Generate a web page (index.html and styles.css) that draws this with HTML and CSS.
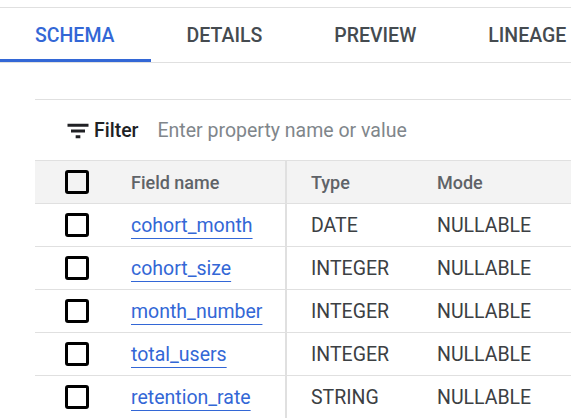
FILE: index.html
```html
<!DOCTYPE html>
<html>
<head>
<meta charset="utf-8">
<link rel="stylesheet" href="styles.css">
</head>
<body>
<div class="page">
  <nav class="tabs">
    <div class="tab active">SCHEMA</div>
    <div class="tab">DETAILS</div>
    <div class="tab">PREVIEW</div>
    <div class="tab">LINEAGE</div>
  </nav>
  <section class="schema">
    <div class="filter-bar">
      <svg class="filter-icon" viewBox="0 0 24 24" width="28" height="28"><path d="M10 18.2h4v-2.6h-4v2.6zM3 5.8v2.6h18V5.8H3zm3 7.5h12v-2.6H6v2.6z" fill="#202124"/></svg>
      <span class="filter-label">Filter</span>
      <span class="filter-placeholder">Enter property name or value</span>
    </div>
    <div class="fields">
      <div class="row head">
        <div class="cell sel"><span class="checkbox"></span></div>
        <div class="cell name">Field name</div>
        <div class="cell type">Type</div>
        <div class="cell mode">Mode</div>
      </div>
      <div class="row">
        <div class="cell sel"><span class="checkbox"></span></div>
        <div class="cell name"><a class="field-link">cohort_month</a></div>
        <div class="cell type">DATE</div>
        <div class="cell mode">NULLABLE</div>
      </div>
      <div class="row">
        <div class="cell sel"><span class="checkbox"></span></div>
        <div class="cell name"><a class="field-link">cohort_size</a></div>
        <div class="cell type">INTEGER</div>
        <div class="cell mode">NULLABLE</div>
      </div>
      <div class="row">
        <div class="cell sel"><span class="checkbox"></span></div>
        <div class="cell name"><a class="field-link">month_number</a></div>
        <div class="cell type">INTEGER</div>
        <div class="cell mode">NULLABLE</div>
      </div>
      <div class="row">
        <div class="cell sel"><span class="checkbox"></span></div>
        <div class="cell name"><a class="field-link">total_users</a></div>
        <div class="cell type">INTEGER</div>
        <div class="cell mode">NULLABLE</div>
      </div>
      <div class="row">
        <div class="cell sel"><span class="checkbox"></span></div>
        <div class="cell name"><a class="field-link">retention_rate</a></div>
        <div class="cell type">STRING</div>
        <div class="cell mode">NULLABLE</div>
      </div>
    </div>
  </section>
</div>
</body>
</html>
```
FILE: styles.css
```css
* { box-sizing: border-box; }
html, body { margin: 0; padding: 0; background: #fff; }
body {
  font-family: Roboto, "Liberation Sans", Arial, sans-serif;
  font-size: 19.5px;
  color: #3c4043;
  overflow: hidden;
}
.page {
  padding-top: 7px;
}
.tabs {
  display: flex;
  border-top: 1px solid #e0e0e0;
  border-bottom: 1px solid #e0e0e0;
  height: 56px;
  overflow: hidden;
}
.tab {
  flex: none;
  padding: 0 36px 0 35px;
  height: 54px;
  display: flex;
  align-items: center;
  font-weight: 500;
  color: #454b50;
  border-bottom: 3px solid transparent;
  padding-top: 3px;
  margin-right: 1px;
}
.tab.active {
  color: #3367d6;
  border-bottom-color: #3367d6;
}
.schema {
  margin-top: 36px;
  margin-left: 35px;
  border-top: 1px solid #e0e0e0;
}
.filter-bar {
  height: 60px;
  display: flex;
  align-items: center;
  padding-left: 28.5px;
  padding-top: 1px;
}
.filter-icon {
  flex: none;
  display: block;
}
.filter-label {
  margin-left: 2.5px;
  font-weight: 500;
  color: #202124;
}
.filter-placeholder {
  margin-left: 19px;
  color: #80868b;
}
.fields {
  border-top: 1px solid #e0e0e0;
}
.row {
  display: grid;
  grid-template-columns: 96px 154px 128px 1fr;
  height: 43px;
  border-bottom: 1px solid #e0e0e0;
}
.row.head {
  background: #f3f3f3;
  font-weight: 500;
  font-size: 18px;
  color: #5f6368;
}
.cell {
  display: flex;
  align-items: center;
  white-space: nowrap;
}
.cell.sel {
  padding-left: 30px;
}
.cell.type {
  border-left: 2px solid #e0e0e0;
  padding-left: 24px;
}
.cell.mode {
  padding-left: 24px;
}
.checkbox {
  width: 24px;
  height: 24px;
  border: 3px solid #000;
  border-radius: 3px;
  display: block;
}
.field-link {
  color: #3367d6;
  text-decoration: underline;
  text-decoration-thickness: 1px;
  text-underline-offset: 6px;
  cursor: pointer;
}
```
